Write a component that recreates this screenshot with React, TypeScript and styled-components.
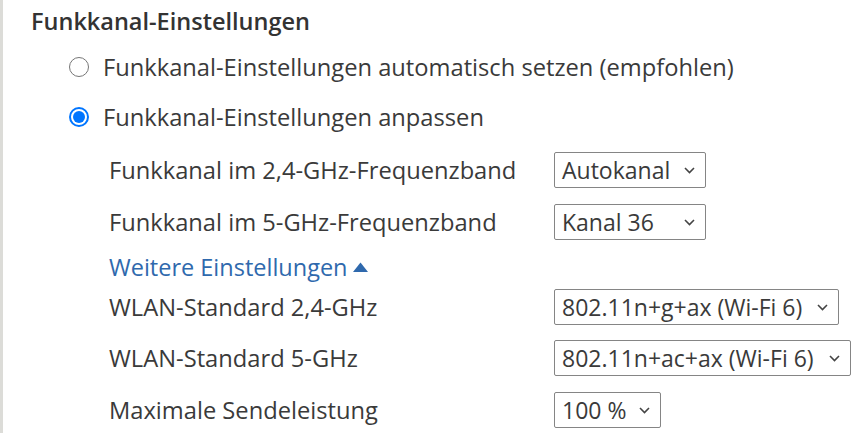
import * as React from 'react';
import styled, { createGlobalStyle } from 'styled-components';

const GlobalStyle = createGlobalStyle`
    html, body {
        margin: 0;
        padding: 0;
        background: #ffffff;
    }
    body {
        font-family: 'Open Sans', 'Noto Sans', sans-serif;
        color: #3a3a3a;
    }
`;

const Page = styled('div')`
    min-height: 100vh;
    border-left: 3px solid #dcdcd8;
    padding-left: 28px;
    box-sizing: border-box;
`;

const Heading = styled('h2')`
    margin: 0;
    height: 42px;
    line-height: 42px;
    font-size: 23.5px;
    font-weight: 600;
    color: #333333;
`;

const RadioList = styled('div')`
    display: flex;
    flex-direction: column;
    padding-left: 38px;
`;

const RadioRow = styled('label')`
    display: flex;
    align-items: center;
    height: 50px;
    gap: 14px;
    font-size: 23.7px;
    cursor: pointer;
`;

const RadioCircle = styled('span')<{ checked?: boolean }>`
    width: 20px;
    height: 20px;
    border-radius: 50%;
    box-sizing: border-box;
    border: ${(p) => (p.checked ? '2px solid #0075ff' : '1px solid #767676')};
    display: flex;
    align-items: center;
    justify-content: center;
    flex-shrink: 0;
    &::after {
        content: '';
        display: ${(p) => (p.checked ? 'block' : 'none')};
        width: 12px;
        height: 12px;
        border-radius: 50%;
        background: #0075ff;
    }
`;

const Settings = styled('div')`
    display: flex;
    flex-direction: column;
    padding-left: 78px;
    padding-top: 10px;
`;

const SettingRow = styled('div')<{ top?: number }>`
    display: flex;
    align-items: center;
    height: 36px;
    margin-top: ${(p) => p.top ?? 0}px;
`;

const Label = styled('span')`
    width: 445px;
    font-size: 23.7px;
    flex-shrink: 0;
`;

const SelectBox = styled('div')<{ width: number }>`
    width: ${(p) => p.width}px;
    height: 36px;
    box-sizing: border-box;
    border: 1px solid #858585;
    border-radius: 2px;
    display: flex;
    align-items: center;
    justify-content: space-between;
    padding: 0 10px 0 7px;
    font-size: 23px;
    color: #3a3a3a;
    background: #ffffff;
    white-space: nowrap;
`;

const MoreLink = styled('a')`
    display: flex;
    align-items: center;
    gap: 5px;
    margin: 15px 0 10px;
    height: 24px;
    font-size: 23.5px;
    color: #2f69ad;
    text-decoration: none;
    cursor: pointer;
`;

const Chevron = () => (
    <svg width="11" height="7" viewBox="0 0 11 7" fill="none">
        <path d="M1 1l4.5 4.5L10 1" stroke="#444" strokeWidth="1.6" />
    </svg>
);

const UpTriangle = () => (
    <svg width="15" height="10" viewBox="0 0 15 10">
        <path d="M0 10L7.5 0.5 15 10z" fill="#2f69ad" />
    </svg>
);

interface ISetting {
    label: string;
    value: string;
    width: number;
    top: number;
}

const basic: ISetting[] = [
    { label: 'Funkkanal im 2,4-GHz-Frequenzband', value: 'Autokanal', width: 152, top: 0 },
    { label: 'Funkkanal im 5-GHz-Frequenzband', value: 'Kanal 36', width: 152, top: 16 },
];

const extended: ISetting[] = [
    { label: 'WLAN-Standard 2,4-GHz', value: '802.11n+g+ax (Wi-Fi 6)', width: 285, top: 0 },
    { label: 'WLAN-Standard 5-GHz', value: '802.11n+ac+ax (Wi-Fi 6)', width: 297, top: 15 },
    { label: 'Maximale Sendeleistung', value: '100 %', width: 107, top: 16 },
];

const Row = ({ item }: { item: ISetting }) => (
    <SettingRow top={item.top}>
        <Label>{item.label}</Label>
        <SelectBox width={item.width}>
            <span>{item.value}</span>
            <Chevron />
        </SelectBox>
    </SettingRow>
);

const App: React.FunctionComponent = () => {
    return (
        <>
            <GlobalStyle />
            <Page>
                <Heading>Funkkanal-Einstellungen</Heading>
                <RadioList>
                    <RadioRow>
                        <RadioCircle />
                        Funkkanal-Einstellungen automatisch setzen (empfohlen)
                    </RadioRow>
                    <RadioRow>
                        <RadioCircle checked />
                        Funkkanal-Einstellungen anpassen
                    </RadioRow>
                </RadioList>
                <Settings>
                    {basic.map((item, index) => (
                        <Row item={item} key={index} />
                    ))}
                    <MoreLink>
                        Weitere Einstellungen
                        <UpTriangle />
                    </MoreLink>
                    {extended.map((item, index) => (
                        <Row item={item} key={index} />
                    ))}
                </Settings>
            </Page>
        </>
    );
};

export default App;
